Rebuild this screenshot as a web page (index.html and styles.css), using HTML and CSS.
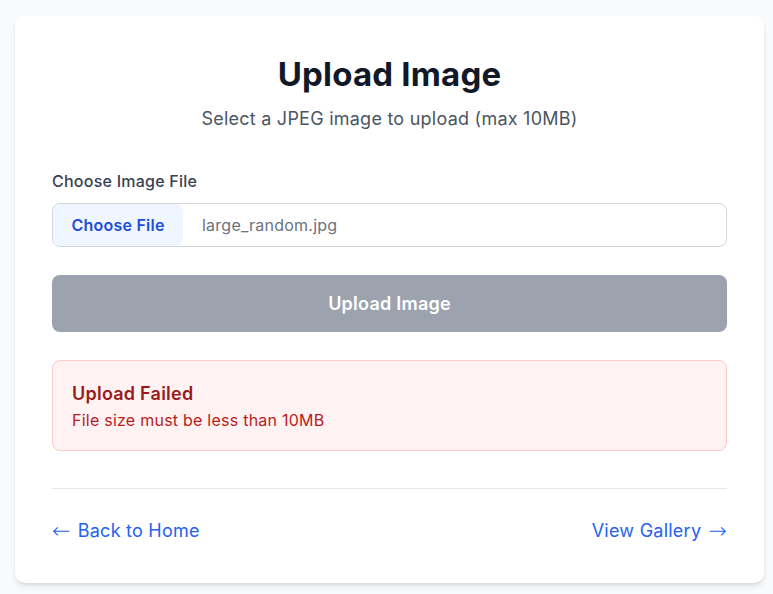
FILE: index.html
```html
<!DOCTYPE html>
<html lang="en">
<head>
<meta charset="utf-8">
<title>Upload Image</title>
<link rel="stylesheet" href="styles.css">
</head>
<body>
<main class="page">
  <section class="card">
    <header class="header">
      <h1 class="title">Upload Image</h1>
      <p class="subtitle">Select a JPEG image to upload (max 10MB)</p>
    </header>
    <form class="form">
      <label class="label">Choose Image File</label>
      <div class="file-input">
        <span class="file-btn">Choose File</span>
        <span class="file-name">large_random.jpg</span>
      </div>
      <button type="button" class="upload-btn">Upload Image</button>
    </form>
    <div class="error">
      <div class="error-title">Upload Failed</div>
      <div class="error-msg">File size must be less than 10MB</div>
    </div>
    <nav class="footer">
      <a class="link" href="#"><span class="arrow arrow-left">←</span> Back to Home</a>
      <a class="link" href="#">View Gallery <span class="arrow arrow-right">→</span></a>
    </nav>
  </section>
</main>
</body>
</html>
```
FILE: styles.css
```css
* { box-sizing: border-box; }
html, body { margin: 0; padding: 0; }
body {
  background: #f9fafb;
  font-family: Inter, "Noto Sans", "Liberation Sans", sans-serif;
  color: #111827;
  letter-spacing: 0.015em;
}
.page {
  padding: 16px 9px 10px 15px;
}
.card {
  width: 749px;
  background: #fff;
  border-radius: 10px;
  box-shadow: 0 4px 6px -1px rgba(0,0,0,0.1), 0 2px 4px -2px rgba(0,0,0,0.1);
  padding: 37px 37px 38px;
}
.header { text-align: center; }
.title {
  margin: 0;
  font-size: 33px;
  line-height: 42px;
  font-weight: 700;
  color: #111827;
  letter-spacing: 0.2px;
}
.subtitle {
  margin: 10px 0 0;
  font-size: 18px;
  line-height: 28px;
  color: #4b5563;
}
.form {
  margin-top: 36px;
  display: flex;
  flex-direction: column;
}
.label {
  font-size: 16px;
  line-height: 24px;
  font-weight: 500;
  color: #374151;
}
.file-input {
  margin-top: 10px;
  height: 44px;
  border: 1px solid #d1d5db;
  border-radius: 8px;
  display: flex;
  align-items: stretch;
  overflow: hidden;
}
.file-btn {
  width: 130px;
  background: #eff6ff;
  color: #1d4ed8;
  font-weight: 600;
  font-size: 16px;
  display: flex;
  align-items: center;
  justify-content: center;
  border-radius: 8px;
}
.file-name {
  display: flex;
  align-items: center;
  padding-left: 19px;
  font-size: 16px;
  color: #6b7280;
}
.upload-btn {
  margin-top: 28px;
  height: 57px;
  border: 0;
  border-radius: 8px;
  background: #9ca3af;
  color: #fff;
  font-family: inherit;
  letter-spacing: inherit;
  font-size: 18px;
  font-weight: 600;
}
.error {
  margin-top: 28px;
  height: 91px;
  background: #fef2f2;
  border: 1px solid #fecaca;
  border-radius: 8px;
  padding: 19px 19px;
}
.error-title {
  font-size: 18px;
  line-height: 28px;
  font-weight: 600;
  color: #991b1b;
}
.error-msg {
  font-size: 16px;
  line-height: 24px;
  color: #b91c1c;
}
.footer {
  margin-top: 37px;
  border-top: 1px solid #e5e7eb;
  padding-top: 28px;
  display: flex;
  justify-content: space-between;
}
.link {
  font-size: 18px;
  line-height: 28px;
  color: #2563eb;
  text-decoration: none;
}
.arrow {
  font-family: "DejaVu Sans", sans-serif;
  font-weight: 200;
  font-size: 22px;
  line-height: 1;
  letter-spacing: 0;
  vertical-align: -1px;
}
.arrow-left { margin-right: 2px; }
.arrow-right { margin-left: 2px; }
```
